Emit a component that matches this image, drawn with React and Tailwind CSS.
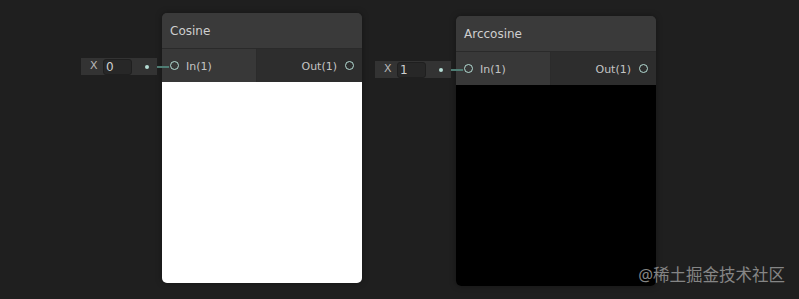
import React from "react";

const font = { fontFamily: '"DejaVu Sans", "Noto Sans", sans-serif' };

function Ring() {
  return <span className="block w-[9px] h-[9px] rounded-full border-[1.5px] border-[#b4dcd4] bg-transparent" />;
}

function Node({ title, value, preview, left, top }) {
  return (
    <div className="absolute" style={{ left, top }}>
      <div className="relative">
        <div className="absolute left-[-81px] top-[45px] flex items-center">
          <div className="w-[76px] h-[17px] bg-[#333333] flex items-center">
            <span className="ml-[9px] w-[13px] text-[11px] text-[#b8b8b8]">X</span>
            <div className="w-[29px] h-[16px] bg-[#272727] rounded-[3px] border border-[#1f1f1f] flex items-center px-[2px] text-[12px] text-[#d0d0d0]">{value}</div>
            <span className="ml-auto mr-[8px] w-[4px] h-[4px] rounded-full bg-[#b4dcd4]" />
          </div>
          <div className="w-[12px] h-[2px] bg-[#4f7d74]" />
        </div>
        <div className="w-[200px] rounded-[5px] overflow-hidden bg-[#2e2e2e] shadow-[0_0_6px_rgba(0,0,0,0.35)]">
          <div className="h-[36px] bg-[#3a3a3a] flex items-center pl-[8px] pt-[1px] text-[12px] text-[#cfcfcf] border-b border-[#2a2a2a]">{title}</div>
          <div className="h-[33px] flex">
            <div className="w-[95px] bg-[#383838] flex items-center pl-[8px] border-r border-[#2b2b2b]">
              <Ring />
              <span className="ml-[7px] mt-[4px] text-[11px] text-[#c4c4c4]">In(1)</span>
            </div>
            <div className="flex-1 bg-[#2d2d2d] flex items-center justify-end pr-[8px]">
              <span className="mr-[8px] mt-[4px] text-[11px] text-[#c4c4c4]">Out(1)</span>
              <Ring />
            </div>
          </div>
          <div className={`h-[201px] ${preview}`} />
        </div>
      </div>
    </div>
  );
}

export default function App() {
  return (
    <div className="relative w-[799px] h-[299px] bg-[#1f1f1f] overflow-hidden" style={font}>
      <Node title="Cosine" value="0" preview="bg-white" left={162} top={13} />
      <Node title="Arccosine" value="1" preview="bg-black" left={456} top={16} />
      <div
        className="absolute right-[14px] top-[263px] text-[16.5px] text-[#858585]"
        style={{ fontFamily: '"Noto Sans", "Noto Sans CJK SC", sans-serif' }}
      >
        @稀土掘金技术社区
      </div>
    </div>
  );
}
